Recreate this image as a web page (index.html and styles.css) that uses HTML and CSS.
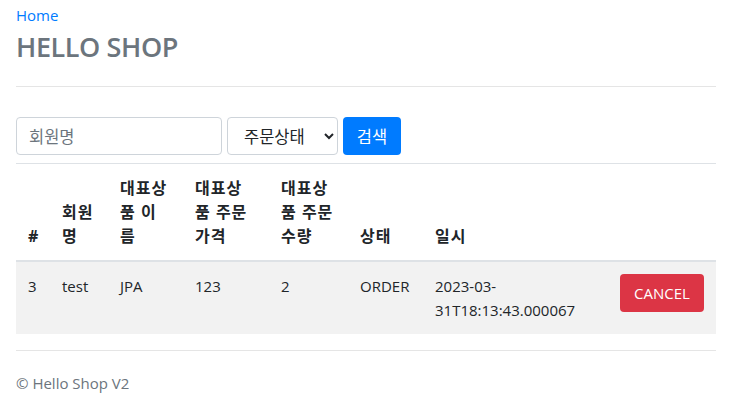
FILE: index.html
```html
<!DOCTYPE html>
<html lang="ko">
<head>
<meta charset="utf-8">
<title>HELLO SHOP</title>
<link rel="stylesheet" href="styles.css">
</head>
<body>
<div class="container">
  <header class="header">
    <a class="home" href="#">Home</a>
    <h3 class="title">HELLO SHOP</h3>
  </header>
  <form class="search">
    <input class="field name" type="text" placeholder="회원명">
    <select class="field status">
      <option>주문상태</option>
    </select>
    <button class="btn btn-primary" type="button">검색</button>
  </form>
  <table class="orders">
    <colgroup>
      <col class="c1"><col class="c2"><col class="c3"><col class="c4"><col class="c5"><col class="c6"><col class="c7"><col class="c8">
    </colgroup>
    <thead>
      <tr>
        <th>#</th>
        <th>회원명</th>
        <th>대표상품 이름</th>
        <th>대표상품 주문가격</th>
        <th>대표상품 주문수량</th>
        <th>상태</th>
        <th>일시</th>
        <th></th>
      </tr>
    </thead>
    <tbody>
      <tr>
        <td>3</td>
        <td>test</td>
        <td>JPA</td>
        <td>123</td>
        <td>2</td>
        <td>ORDER</td>
        <td>2023-03-31T18:13:43.000067</td>
        <td><button class="btn btn-danger" type="button">CANCEL</button></td>
      </tr>
    </tbody>
  </table>
  <footer class="footer">© Hello Shop V2</footer>
</div>
</body>
</html>
```
FILE: styles.css
```css
* { box-sizing: border-box; }
body {
  margin: 0;
  font-family: "Open Sans", "Noto Sans CJK KR", sans-serif;
  font-size: 15px;
  line-height: 24px;
  color: #212529;
  background: #fff;
}
.container { padding: 0 15px 0 16px; }
.header {
  padding-top: 3px;
  padding-bottom: 20px;
  border-bottom: 1px solid #e5e5e5;
}
.home {
  display: block;
  color: #007bff;
  text-decoration: none;
}
.title {
  margin: 1px 0 0;
  font-size: 27px;
  line-height: 38px;
  font-weight: 600;
  letter-spacing: -0.4px;
  color: #6c757d;
}
.search {
  display: flex;
  gap: 5px;
  margin-top: 30px;
  margin-bottom: 8px;
}
.field {
  height: 38px;
  border: 1px solid #ced4da;
  border-radius: 4px;
  font-family: inherit;
  font-size: 16.5px;
  color: #495057;
  background: #fff;
}
.name { width: 206px; padding: 0 12px; }
.name::placeholder { color: #6c757d; }
.status { width: 111px; padding: 0 6px 0 12px; color: #212529; }
.btn {
  height: 38px;
  border: 1px solid transparent;
  border-radius: 4px;
  font-family: inherit;
  font-size: 16.5px;
  color: #fff;
  padding: 0 12px;
}
.btn-primary { background: #007bff; width: 58px; }
.btn-danger { background: #dc3545; width: 84px; font-size: 15px; }
.orders {
  width: 100%;
  table-layout: fixed;
  border-collapse: collapse;
}
.c1 { width: 34px; }
.c2 { width: 58px; }
.c3 { width: 75px; }
.c4 { width: 86px; }
.c5 { width: 79px; }
.c6 { width: 75px; }
.c7 { width: 185px; }
.c8 { width: 108px; }
.orders th, .orders td {
  padding: 12px;
  text-align: left;
}
.orders th {
  vertical-align: bottom;
  font-size: 16px;
  letter-spacing: 1px;
  font-weight: 700;
  border-top: 1px solid #dee2e6;
  border-bottom: 2px solid #dee2e6;
}
.orders td { vertical-align: top; }
.orders tbody tr { background: #f2f2f2; }
.footer {
  margin-top: 16px;
  border-top: 1px solid #e5e5e5;
  padding-top: 20px;
  color: #6c757d;
}
```
